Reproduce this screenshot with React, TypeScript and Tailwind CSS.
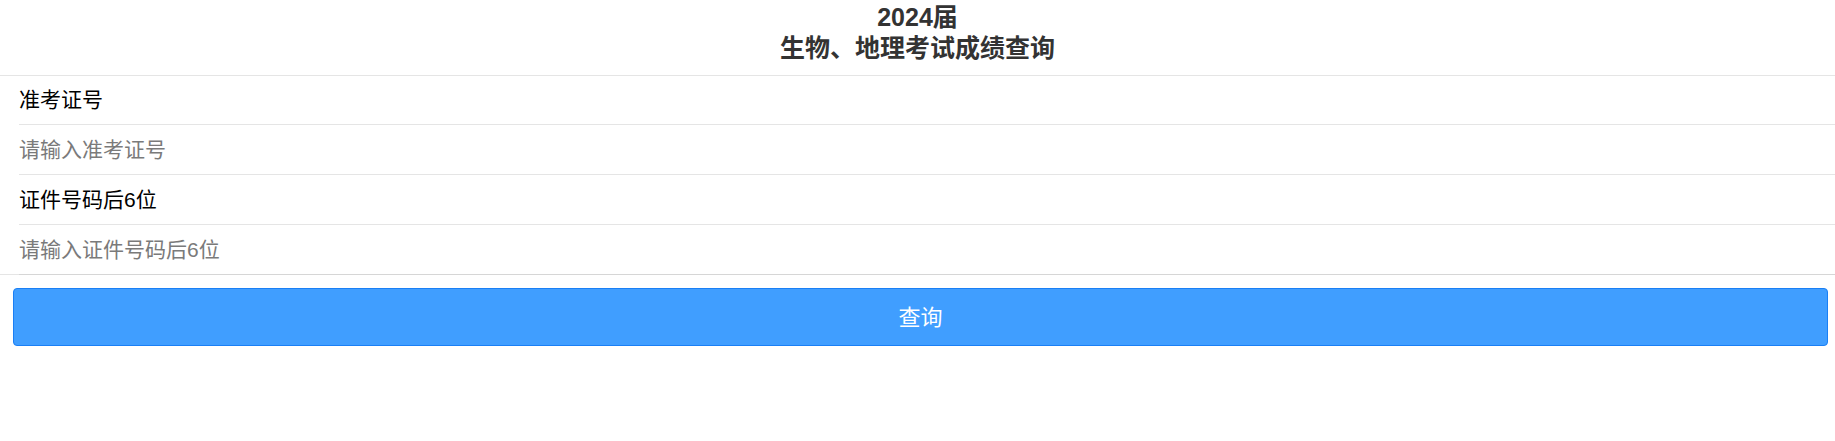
import React from "react";

const font = { fontFamily: '"Liberation Sans", "Noto Sans CJK SC", sans-serif' };

export default function App() {
  return (
    <div className="w-[1835px] h-[441px] bg-white" style={font}>
      <div className="h-[75px] pt-[2px] text-center text-[25px] leading-[31px] font-bold text-[#333]">
        <div>2024届</div>
        <div>生物、地理考试成绩查询</div>
      </div>
      <div className="border-t border-[#e5e5e5]">
        <div className="pl-[19px]">
          <div className="h-[49px] flex items-center border-b border-[#e5e5e5] text-[21px] text-black">
            准考证号
          </div>
          <div className="h-[50px] flex items-center border-b border-[#e5e5e5]">
            <input
              className="w-full h-full outline-none text-[21px] text-black placeholder:text-[#7a7a7a] bg-transparent"
              placeholder="请输入准考证号"
            />
          </div>
          <div className="h-[50px] flex items-center border-b border-[#e5e5e5] text-[21px] text-black">
            证件号码后6位
          </div>
          <div className="h-[49px] flex items-center">
            <input
              className="w-full h-full outline-none text-[21px] text-black placeholder:text-[#7a7a7a] bg-transparent"
              placeholder="请输入证件号码后6位"
            />
          </div>
        </div>
        <div className="flex h-px">
          <div className="w-[19px] bg-[#e5e5e5]" />
          <div className="flex-1 bg-[#d6d6d6]" />
        </div>
      </div>
      <div className="mt-[13px] ml-[13px] mr-[7px]">
        <button className="w-full h-[58px] rounded-[4px] border border-[#1a7ff5] bg-[#409eff] text-white text-[22px] flex items-center justify-center">
          查询
        </button>
      </div>
    </div>
  );
}
